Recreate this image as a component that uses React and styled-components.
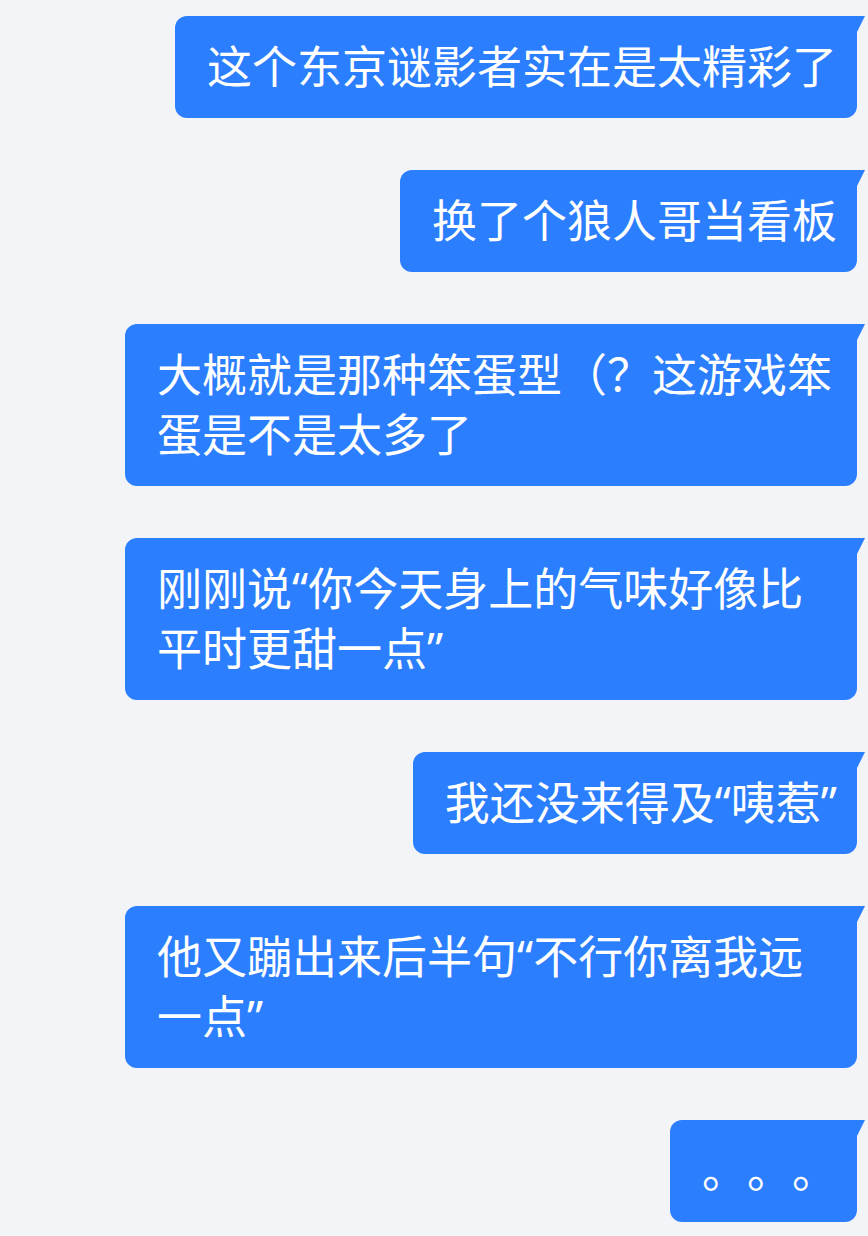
import React from "react";
import styled, { createGlobalStyle } from "styled-components";

const GlobalStyle = createGlobalStyle`
  html, body {
    margin: 0;
    padding: 0;
    background: #f3f4f8;
  }
  body {
    font-family: "Noto Sans", "Noto Sans CJK SC", sans-serif;
  }
`;

const Thread = styled.div`
  display: flex;
  flex-direction: column;
  align-items: flex-end;
  gap: 52px;
  padding: 16px 11px 14px 0;
  min-height: 1236px;
  box-sizing: border-box;
  background: #f3f4f8;
`;

const Bubble = styled.div`
  position: relative;
  box-sizing: border-box;
  max-width: 732px;
  padding: 21px 20px 21px 32px;
  background: #2b7efe;
  color: #ffffff;
  font-size: 45px;
  line-height: 60px;
  border-radius: 12px 0 12px 12px;
  word-break: break-all;
  text-spacing-trim: space-all;

  &::after {
    content: "";
    position: absolute;
    top: 0;
    right: -8px;
    width: 9px;
    height: 18px;
    background: #2b7efe;
    clip-path: polygon(0 0, 100% 0, 0 100%);
  }
`;

const messages = [
  "这个东京谜影者实在是太精彩了",
  "换了个狼人哥当看板",
  "大概就是那种笨蛋型（？这游戏笨蛋是不是太多了",
  "刚刚说“你今天身上的气味好像比平时更甜一点”",
  "我还没来得及“咦惹”",
  "他又蹦出来后半句“不行你离我远一点”",
  "。。。",
];

export default function App() {
  return (
    <>
      <GlobalStyle />
      <Thread>
        {messages.map((m, i) => (
          <Bubble key={i}>{m}</Bubble>
        ))}
      </Thread>
    </>
  );
}
